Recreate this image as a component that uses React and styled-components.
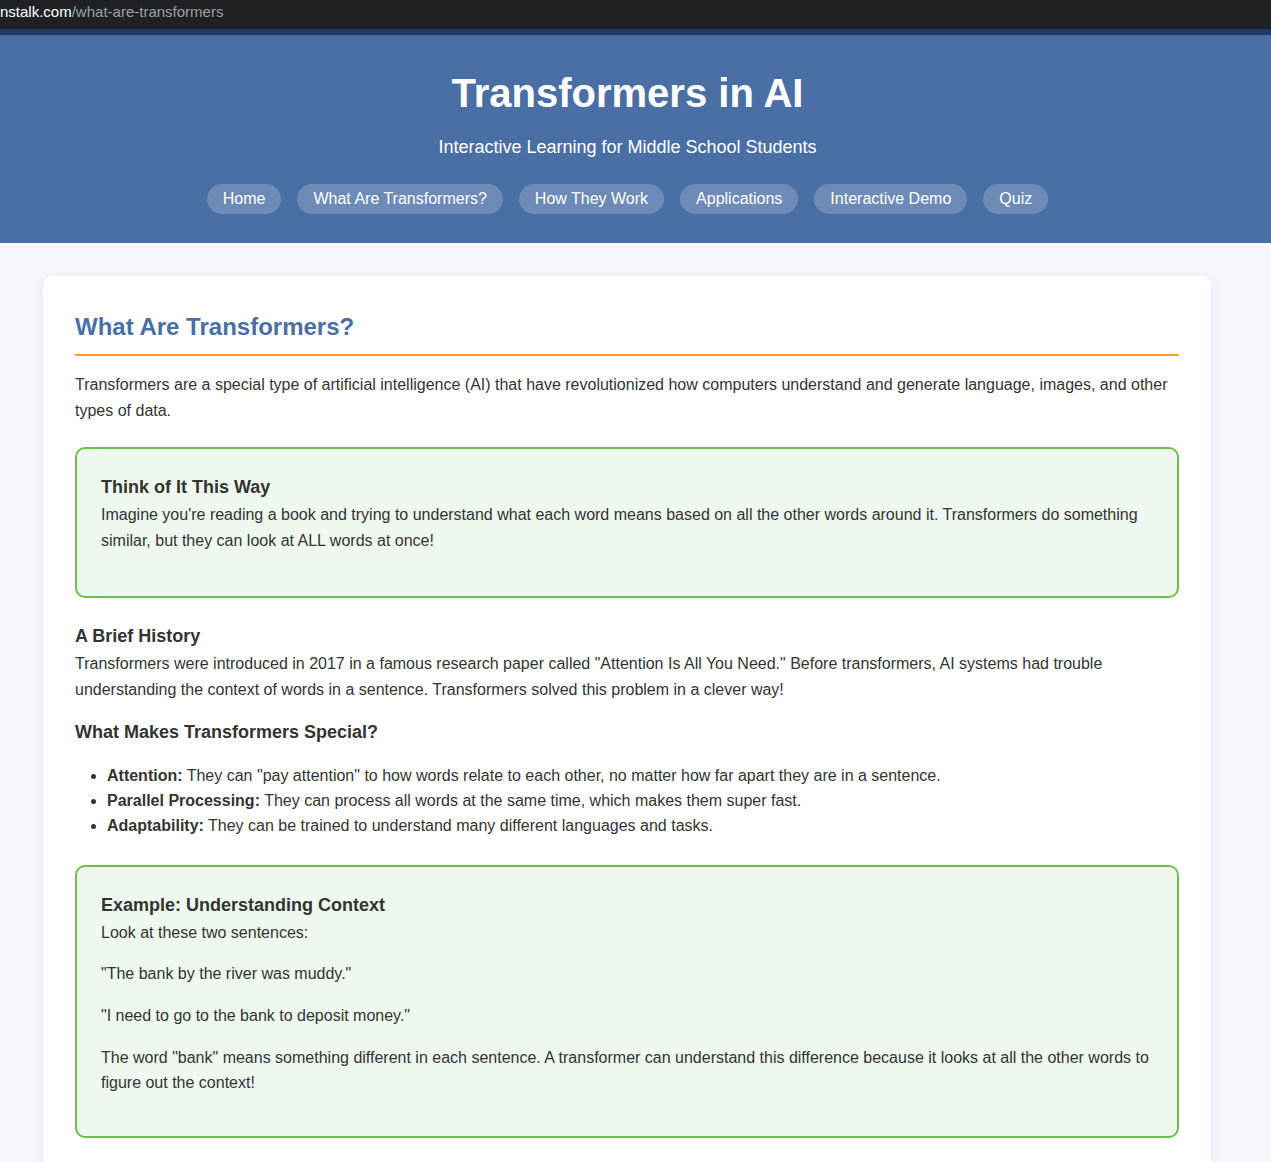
import React from 'react';
import styled, { createGlobalStyle } from 'styled-components';

const GlobalStyle = createGlobalStyle`
  * { box-sizing: border-box; }
  body {
    margin: 0;
    background: #f5f7fc;
    font-family: "Liberation Sans", Arial, sans-serif;
    color: #333;
    line-height: 1.6;
  }
`

const AddressBar = styled.div`
  height: 29px;
  background: #202124;
  font-size: 15px;
  line-height: 24px;
  color: #fff;
  white-space: nowrap;
  span { color: #9aa0a6; }
`

const Header = styled.header`
  background: #4a6fa5;
  border-top: 6px solid #223a63;
  color: #fff;
  text-align: center;
  padding: 34px 36px 29px 20px;
`

const Title = styled.h1`
  margin: 0;
  font-size: 40px;
  line-height: 48px;
  font-weight: 700;
`

const Subtitle = styled.p`
  margin: 16px 0 22px;
  font-size: 18px;
  line-height: 29px;
`

const Nav = styled.nav`
  display: flex;
  justify-content: center;
  gap: 16px;
`

const NavLink = styled.a`
  display: block;
  padding: 5px 16px;
  line-height: 20px;
  font-size: 16px;
  color: #fff;
  text-decoration: none;
  border-radius: 20px;
  background: rgba(255, 255, 255, 0.2);
`

const Main = styled.main`
  padding: 33px 60px 40px 43px;
`

const Card = styled.section`
  background: #fff;
  border-radius: 10px;
  box-shadow: 0 2px 12px rgba(40, 60, 110, 0.08);
  padding: 32px;
`

const SectionTitle = styled.h2`
  margin: 0 0 16px;
  padding-bottom: 8px;
  border-bottom: 2px solid #ff9a3c;
  color: #4a6fa5;
  font-size: 24px;
  line-height: 38px;
`

const Text = styled.p`
  margin: 0 0 16px;
  font-size: 16px;
`

const SubTitle = styled.h3`
  margin: 0;
  font-size: 18px;
  line-height: 1.6;
  color: #333;
`

const InfoBox = styled.div`
  margin: 24px 0;
  padding: 24px 24px ${(p) => p.$bottom || 24}px;
  background: #eef8ee;
  border: 2px solid #6cc04a;
  border-radius: 10px;
`

const List = styled.ul`
  margin: 16px 0 27px;
  padding-left: 32px;
  font-size: 16px;
`

const Item = styled.li`
  line-height: 25px;
`

const navItems = ['Home', 'What Are Transformers?', 'How They Work', 'Applications', 'Interactive Demo', 'Quiz'];

export default function App() {
  return (
    <>
      <GlobalStyle />
      <AddressBar>nstalk.com<span>/what-are-transformers</span></AddressBar>
      <Header>
        <Title>Transformers in AI</Title>
        <Subtitle>Interactive Learning for Middle School Students</Subtitle>
        <Nav>
          {navItems.map((n) => <NavLink key={n} href="#">{n}</NavLink>)}
        </Nav>
      </Header>
      <Main>
        <Card>
          <SectionTitle>What Are Transformers?</SectionTitle>
          <Text>
            Transformers are a special type of artificial intelligence (AI) that have revolutionized how computers understand and generate language, images, and other types of data.
          </Text>

          <InfoBox $bottom={27}>
            <SubTitle>Think of It This Way</SubTitle>
            <Text>
              Imagine you're reading a book and trying to understand what each word means based on all the other words around it. Transformers do something similar, but they can look at ALL words at once!
            </Text>
          </InfoBox>

          <SubTitle>A Brief History</SubTitle>
          <Text>
            Transformers were introduced in 2017 in a famous research paper called "Attention Is All You Need." Before transformers, AI systems had trouble understanding the context of words in a sentence. Transformers solved this problem in a clever way!
          </Text>

          <SubTitle>What Makes Transformers Special?</SubTitle>
          <List>
            <Item><strong>Attention:</strong> They can "pay attention" to how words relate to each other, no matter how far apart they are in a sentence.</Item>
            <Item><strong>Parallel Processing:</strong> They can process all words at the same time, which makes them super fast.</Item>
            <Item><strong>Adaptability:</strong> They can be trained to understand many different languages and tasks.</Item>
          </List>

          <InfoBox>
            <SubTitle>Example: Understanding Context</SubTitle>
            <Text>Look at these two sentences:</Text>
            <Text>"The bank by the river was muddy."</Text>
            <Text>"I need to go to the bank to deposit money."</Text>
            <Text>
              The word "bank" means something different in each sentence. A transformer can understand this difference because it looks at all the other words to figure out the context!
            </Text>
          </InfoBox>
        </Card>
      </Main>
    </>
  );
}
